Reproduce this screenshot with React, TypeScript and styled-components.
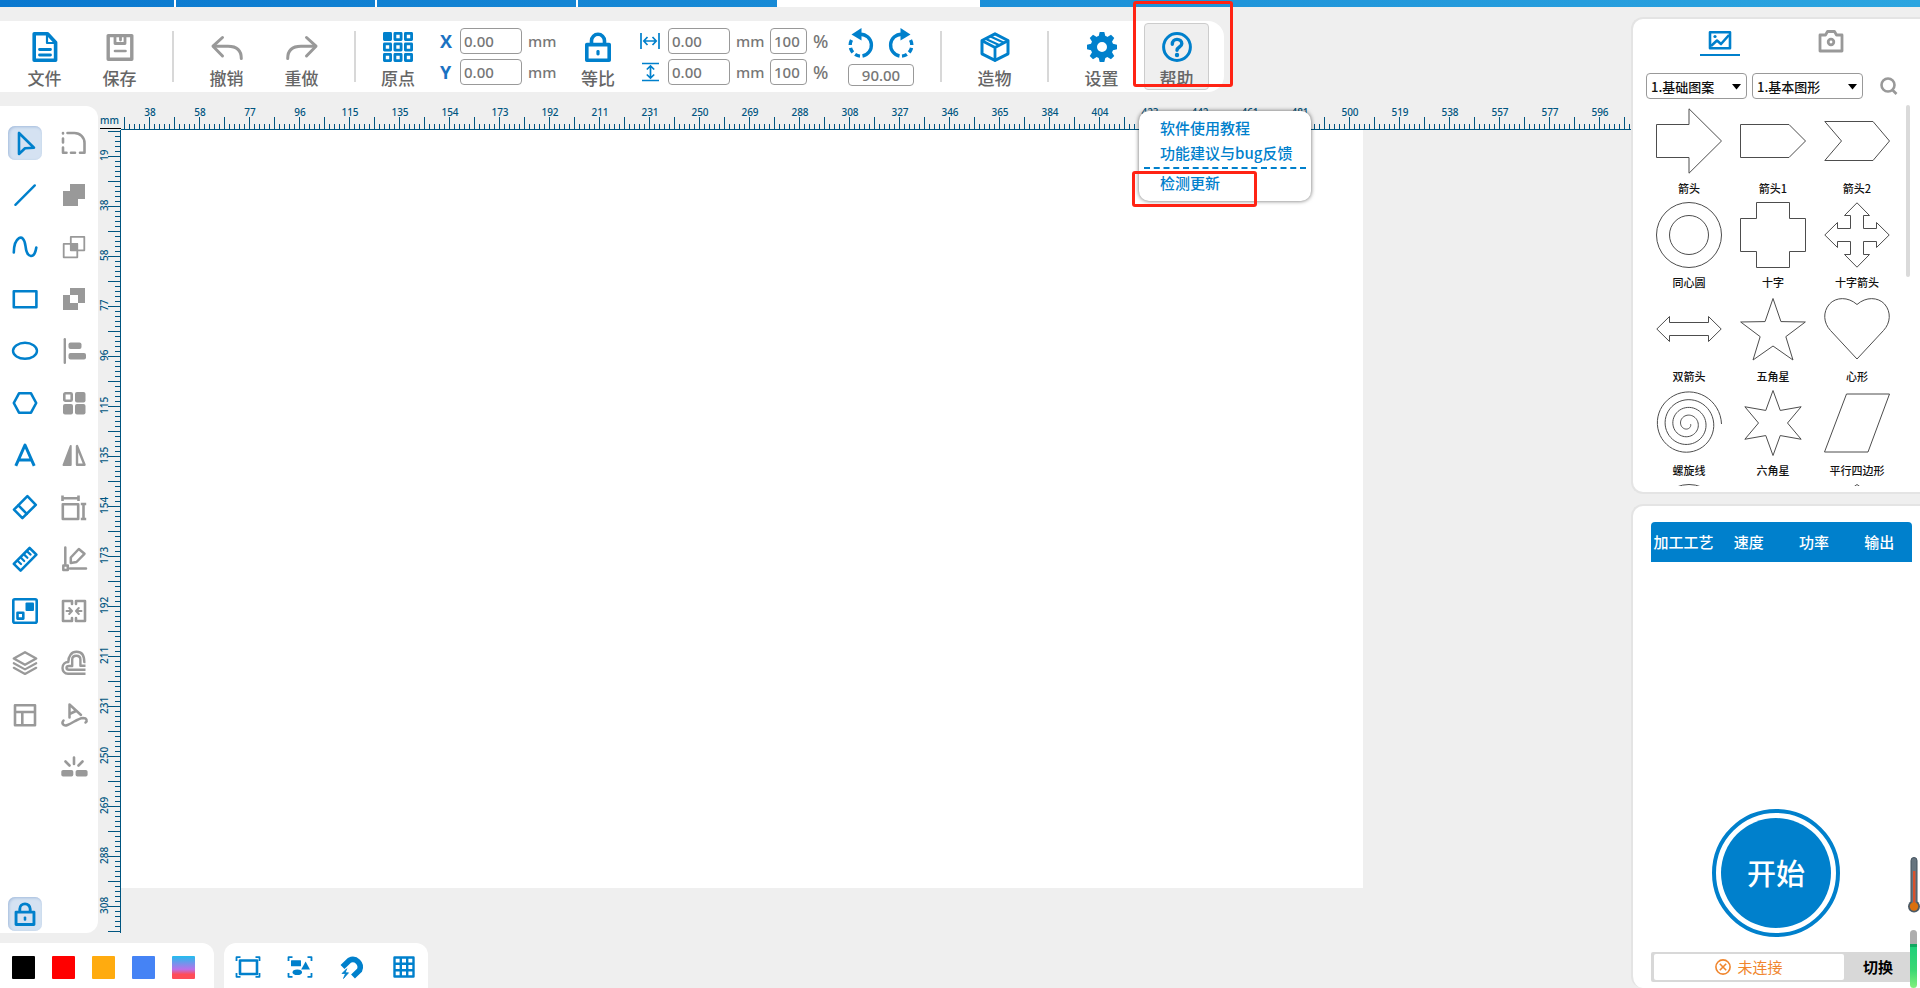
import React from "react";
import styled, { createGlobalStyle, css } from "styled-components";

const BLUE = "#0080cc";
const GREY = "#999999";
const INK = "#005580";
const LATIN = `"Noto Sans", "Noto Sans CJK SC", sans-serif`;

const GlobalStyle = createGlobalStyle`
  *, *::before, *::after { box-sizing: border-box; }
  body {
    margin: 0;
    background: #efefef;
    font-family: "Noto Sans CJK SC", "Noto Sans", sans-serif;
    color: #666;
  }
  button, input, select { font-family: inherit; margin: 0; }
  button { border: 0; padding: 0; background: none; cursor: pointer; color: inherit; }
`;

/* ---------- page frame ---------- */

const Page = styled.div`
  height: 100vh;
  display: flex;
  flex-direction: column;
  overflow: hidden;
`;

const TitleStrip = styled.div`
  flex: none;
  height: 7px;
  display: flex;
  background: linear-gradient(90deg, #0a78cf, #2ca5e0);
`;

const StripTab = styled.span<{ $width: number; $active?: boolean }>`
  width: ${(p) => p.$width}px;
  border-right: 2px solid #fff;
  background: ${(p) => (p.$active ? "#fff" : "transparent")};
`;

const Body = styled.div`
  flex: 1;
  min-height: 0;
  display: flex;
`;

const Main = styled.main`
  flex: 1;
  min-width: 0;
  display: flex;
  flex-direction: column;
  padding-top: 14px;
`;

/* ---------- top toolbar ---------- */

const Toolbar = styled.div`
  align-self: flex-start;
  flex: none;
  height: 71px;
  display: flex;
  align-items: center;
  gap: 10px;
  padding: 0 15px 0 12px;
  background: #fff;
  border-radius: 0 16px 16px 0;
`;

const Divider = styled.span`
  width: 2px;
  height: 51px;
  margin: 0 10px;
  background: #d8d8d8;
`;

const ToolButton = styled.button<{ $narrow?: boolean; $open?: boolean }>`
  width: ${(p) => (p.$narrow ? 44 : 65)}px;
  height: 67px;
  display: flex;
  flex-direction: column;
  align-items: center;
  justify-content: flex-end;
  gap: 6px;
  padding-bottom: 1px;
  font-size: 17px;
  font-weight: 500;
  line-height: 20px;
  color: #666;
  border-radius: 4px;
  border: 1px solid ${(p) => (p.$open ? "#cccccc" : "transparent")};
  background: ${(p) => (p.$open ? "#efefef" : "transparent")};
`;

const Fields = styled.div`
  display: flex;
  align-items: center;
  gap: 20px;
  padding-right: 6px;
`;

const FieldStack = styled.div`
  display: flex;
  flex-direction: column;
  gap: 5px;
`;

const FieldRow = styled.div`
  display: flex;
  align-items: center;
  gap: 6px;
  font: 500 15px/26px ${LATIN};
  color: #777;
`;

const AxisLabel = styled.label`
  width: 14px;
  font: 700 18px/26px "Open Sans", sans-serif;
  color: #1a72c2;
`;

const IconLabel = styled.label`
  display: flex;
  width: 22px;
`;

const Unit = styled.span<{ $percent?: boolean }>`
  width: ${(p) => (p.$percent ? 15 : 28)}px;
  font-size: ${(p) => (p.$percent ? 18 : 15)}px;
`;

const NumberInput = styled.input<{ $width: number; $center?: boolean }>`
  width: ${(p) => p.$width}px;
  height: 26px;
  padding: 0 3px;
  border: 1px solid #999;
  border-radius: 4px;
  background: #fff;
  font: 500 15px/24px ${LATIN};
  color: #777;
  text-align: ${(p) => (p.$center ? "center" : "left")};
`;

const RotateBox = styled.div`
  display: flex;
  flex-direction: column;
  gap: 2px;
`;

const RotatePair = styled.div`
  display: flex;
  justify-content: space-between;
`;

const AngleInput = styled(NumberInput)`
  height: 22px;
`;

/* ---------- help menu ---------- */

const HelpWrap = styled.div`
  position: relative;
`;

const Menu = styled.div`
  position: absolute;
  z-index: 5;
  left: -5px;
  top: 88px;
  width: 172px;
  height: 90px;
  padding: 4px 5px;
  background: #fff;
  border-radius: 10px;
  box-shadow: 0 0 4px rgba(0, 0, 0, 0.6);
`;

const MenuItem = styled.button`
  display: block;
  width: 100%;
  padding-left: 16px;
  font-size: 15px;
  font-weight: 500;
  line-height: 25px;
  text-align: left;
  white-space: nowrap;
  color: ${BLUE};
`;

const MenuRule = styled.hr`
  margin: 2px 0 1px;
  border: 0;
  border-top: 2px dashed ${BLUE};
`;

const Marker = styled.span<{ $top: number; $left: number; $w: number; $h: number }>`
  position: absolute;
  z-index: 6;
  top: ${(p) => p.$top}px;
  left: ${(p) => p.$left}px;
  width: ${(p) => p.$w}px;
  height: ${(p) => p.$h}px;
  border: 3px solid #ff2314;
  border-radius: 3px;
  pointer-events: none;
`;

/* ---------- left tools ---------- */

const Middle = styled.div`
  flex: 1;
  min-height: 0;
  display: flex;
  margin: 14px 0 10px;
`;

const ToolPanel = styled.nav`
  flex: none;
  display: flex;
  gap: 15px;
  width: 98px;
  padding: 20px 7px 2px 8px;
  background: #fff;
  border-radius: 0 12px 12px 0;
`;

const ToolColumn = styled.div`
  display: flex;
  flex-direction: column;
  gap: 18px;
`;

const SideTool = styled.button<{ $on?: boolean; $last?: boolean }>`
  width: 34px;
  height: 34px;
  display: flex;
  align-items: center;
  justify-content: center;
  border-radius: 7px;
  ${(p) =>
    p.$on &&
    css`
      background: #d5e2f2;
      box-shadow: inset 1px 1px 3px #a3bcdc;
    `}
  ${(p) => p.$last && css`margin-top: auto;`}
`;

/* ---------- stage and rulers ---------- */

const Stage = styled.section`
  flex: 1;
  min-width: 0;
  display: grid;
  grid-template: 24px minmax(0, 1fr) / 23px minmax(0, 1fr);
`;

const Corner = styled.div`
  margin-left: 2px;
  margin-bottom: 1px;
  padding-top: 8px;
  border-bottom: 1px solid #000;
  font: 500 10px/12px ${LATIN};
  color: ${INK};
`;

const RulerX = styled.div`
  display: flex;
  overflow: hidden;
  padding-left: 4px;
  border-bottom: 1px solid ${INK};
  background:
    repeating-linear-gradient(90deg, ${INK} 0 1px, transparent 1px 25px) 3px 100% / 100% 12px no-repeat,
    repeating-linear-gradient(90deg, ${INK} 0 1px, transparent 1px 5px) 3px 100% / 100% 5px no-repeat;
`;

const RulerY = styled.div`
  display: flex;
  flex-direction: column;
  overflow: hidden;
  border-right: 1px solid ${INK};
  background:
    repeating-linear-gradient(180deg, ${INK} 0 1px, transparent 1px 25px) 100% 1px / 12px 100% no-repeat,
    repeating-linear-gradient(180deg, ${INK} 0 1px, transparent 1px 5px) 100% 1px / 5px 100% no-repeat;
`;

const TickLabel = styled.span<{ $vertical?: boolean }>`
  flex: 0 0 50px;
  font: 500 10px/12px ${LATIN};
  text-align: center;
  color: ${INK};
  ${(p) =>
    p.$vertical &&
    css`
      width: 12px;
      writing-mode: vertical-rl;
      transform: rotate(180deg);
    `}
`;

const Workspace = styled.div`
  display: flex;
  padding: 0 268px 45px 0;
`;

const Paper = styled.div`
  flex: 1;
  background: #fff;
`;

/* ---------- bottom bars ---------- */

const BottomBar = styled.footer`
  flex: none;
  display: flex;
  gap: 10px;
  height: 45px;
`;

const Palette = styled.div`
  display: flex;
  gap: 17px;
  padding: 13px 19px 9px 12px;
  background: #fff;
  border-radius: 0 12px 0 0;
`;

const Swatch = styled.button<{ $fill: string }>`
  width: 23px;
  height: 23px;
  border-radius: 1px;
  background: ${(p) => p.$fill};
`;

const ViewTools = styled.div`
  display: flex;
  gap: 26px;
  padding: 11px 11px 8px;
  background: #fff;
  border-radius: 12px 12px 0 0;
`;

const ViewTool = styled.button`
  width: 26px;
  height: 26px;
  display: flex;
`;

/* ---------- right column ---------- */

const Side = styled.aside`
  flex: none;
  width: 289px;
  display: flex;
  flex-direction: column;
  gap: 10px;
  padding-top: 10px;
`;

const Card = styled.section`
  position: relative;
  background: #fff;
  border: 2px solid #e4e4e4;
  border-right: 0;
  border-radius: 12px 0 0 12px;
`;

const LibraryCard = styled(Card)`
  padding-bottom: 6px;
`;

const JobCard = styled(Card)`
  flex: 1;
  display: flex;
  flex-direction: column;
  padding: 16px 8px 6px 18px;
  border-bottom: 0;
`;

const TabRow = styled.div`
  display: flex;
  gap: 71px;
  padding: 10px 0 0 67px;
`;

const Tab = styled.button<{ $on?: boolean }>`
  width: 40px;
  height: 27px;
  display: flex;
  justify-content: center;
  border-bottom: 2px solid ${(p) => (p.$on ? BLUE : "transparent")};
`;

const FilterRow = styled.div`
  display: flex;
  align-items: center;
  gap: 5px;
  padding: 17px 0 2px 13px;
`;

const SelectBox = styled.span<{ $width: number }>`
  position: relative;
  display: flex;
  width: ${(p) => p.$width}px;
`;

const Select = styled.select`
  appearance: none;
  width: 100%;
  height: 26px;
  padding: 0 20px 0 4px;
  border: 1px solid #999;
  border-radius: 4px;
  background: #fff;
  font-size: 13px;
  font-weight: 500;
  color: #111;
`;

const Caret = styled.svg`
  position: absolute;
  right: 6px;
  top: 11px;
  pointer-events: none;
`;

const SearchButton = styled.button`
  display: flex;
  margin-left: 12px;
`;

const ShapeArea = styled.div`
  display: flex;
  justify-content: space-between;
  height: 385px;
  padding: 4px 10px 0 14px;
  overflow: hidden;
`;

const ShapeGrid = styled.div`
  display: grid;
  grid-template-columns: repeat(3, 84px);
  align-content: start;
  gap: 4px 0;
  padding-top: 3px;
`;

const ShapeCell = styled.button`
  display: flex;
  flex-direction: column;
  align-items: center;
  gap: 4px;
  height: 90px;
  font-size: 11px;
  font-weight: 500;
  line-height: 20px;
  color: #111;
`;

const ScrollThumb = styled.span`
  width: 4px;
  height: 172px;
  border-radius: 2px;
  background: #dadada;
`;

const JobTable = styled.table`
  width: 100%;
  table-layout: fixed;
  border-collapse: collapse;
  background: ${BLUE};
  border-radius: 4px 4px 0 0;
`;

const HeadCell = styled.th`
  height: 40px;
  padding: 0 0 2px;
  font-size: 15px;
  font-weight: 500;
  white-space: nowrap;
  color: #fff;
`;

const StartButton = styled.button`
  width: 128px;
  height: 128px;
  margin: auto auto 15px 61px;
  padding: 5px;
  border: 4px solid ${BLUE};
  border-radius: 50%;
  display: flex;
`;

const StartFace = styled.span`
  flex: 1;
  height: 110px;
  border-radius: 50%;
  background: ${BLUE};
  font-size: 29px;
  font-weight: 500;
  line-height: 108px;
  color: #fff;
`;

const StatusRow = styled.div`
  display: flex;
  height: 30px;
  padding: 2px 0 2px 3px;
  border-radius: 2px;
  background: #d8d8d8;
`;

const Status = styled.output`
  width: 190px;
  display: flex;
  align-items: center;
  justify-content: center;
  gap: 6px;
  border-radius: 2px;
  background: #fff;
  font-size: 15px;
  line-height: 24px;
  color: #f0862e;
`;

const SwitchButton = styled.button`
  flex: 1;
  font-size: 15px;
  font-weight: 700;
  line-height: 24px;
  color: #000;
`;

const Thermometer = styled.svg`
  position: absolute;
  right: 0;
  bottom: 75px;
`;

const Level = styled.span`
  position: absolute;
  right: 3px;
  bottom: 0;
  width: 7px;
  height: 58px;
  border-radius: 4px;
  background: linear-gradient(#adadad 0 14px, #10a860 14px 17px, #1fd07a 17px, #3ad873 40px, #84f07c);
`;

/* ---------- icons ---------- */

type IconProps = { size?: number; color?: string; stroke?: number; children: React.ReactNode };

const Icon = ({ size = 26, color = BLUE, stroke = 2.6, children }: IconProps) => (
  <svg
    width={size}
    height={size}
    viewBox={`0 0 ${size} ${size}`}
    fill="none"
    stroke={color}
    strokeWidth={stroke}
    strokeLinecap="round"
    strokeLinejoin="round"
    overflow="visible"
    aria-hidden="true"
  >
    {children}
  </svg>
);

const FileIcon = () => (
  <Icon size={30} stroke={3.6}>
    <path d="M4.2 1.8H17.5L25.6 10.5V28.2H4.2Z" />
    <path d="M17 2.5V11H25" strokeWidth={2.2} />
    <path d="M9.5 17.5H20.5M9.5 23H20.5" strokeWidth={2.8} />
  </Icon>
);

const SaveIcon = () => (
  <Icon size={30} stroke={3.4} color={GREY}>
    <path d="M3.2 3.6H26.8V27.2H3.2Z" />
    <path d="M10 4V11.5H20V4M15.5 4V8" strokeWidth={2.8} />
    <path d="M10 19H20.5" strokeWidth={2.6} />
  </Icon>
);

const UndoIcon = ({ flip }: { flip?: boolean }) => (
  <Icon size={30} stroke={3} color={GREY}>
    <g transform={flip ? "matrix(-1 0 0 1 30 0)" : undefined}>
      <path d="M10.5 5.5L1 14.2L10.5 24" />
      <path d="M2 14.2H16C25 14.2 29.3 18.5 29.3 26.5" />
    </g>
  </Icon>
);

const OriginIcon = () => (
  <Icon size={30} stroke={2.8}>
    {[0, 1, 2].flatMap((r) =>
      [0, 1, 2].map((c) => (
        <rect
          key={`${r}${c}`}
          x={1.4 + c * 10.5}
          y={1.4 + r * 10.5}
          width={6.2}
          height={6.2}
          fill={r + c === 0 ? BLUE : "none"}
        />
      ))
    )}
  </Icon>
);

const LockIcon = ({ size = 30 }: { size?: number }) => (
  <svg width={size} height={size} viewBox="0 0 30 30" fill="none" stroke={BLUE} strokeWidth={3.6} strokeLinejoin="round" aria-hidden="true">
    <rect x={3.8} y={12.6} width={22.4} height={15.6} />
    <path d="M8.5 12V8.8A6.5 6.5 0 0 1 21.5 8.8V12" />
    <rect x={13.4} y={18} width={3.2} height={5.5} rx={1.4} fill={BLUE} stroke="none" />
  </svg>
);

const WidthIcon = () => (
  <svg width={20} height={16} viewBox="0 0 20 16" fill="none" stroke={BLUE} strokeWidth={1.7} aria-hidden="true">
    <path d="M1 0V16M19 0V16M4 8H16M7.5 4L3.8 8L7.5 12M12.5 4L16.2 8L12.5 12" />
  </svg>
);

const HeightIcon = () => (
  <svg width={20} height={20} viewBox="0 0 20 20" fill="none" stroke={BLUE} strokeWidth={1.7} aria-hidden="true">
    <path d="M2 1.5H19M2 18.5H19M10.5 4.5V15.5M6.8 7.5L10.5 4L14.2 7.5M6.8 12.5L10.5 16L14.2 12.5" />
  </svg>
);

const RotateIcon = ({ flip }: { flip?: boolean }) => (
  <svg width={26} height={30} viewBox="0 0 26 30" fill="none" stroke={BLUE} strokeWidth={3.4} aria-hidden="true">
    <g transform={flip ? "matrix(-1 0 0 1 26 0)" : undefined}>
      <path d="M12.5 6.2A11 11 0 0 1 14.5 28" />
      <path d="M12 28.1A11 11 0 0 1 5 9.8" strokeDasharray="5.2 2.8" />
      <path d="M3.5 6.5L13.5 0V12.5Z" fill={BLUE} stroke="none" />
    </g>
  </svg>
);

const BoxIcon = () => (
  <Icon size={30} stroke={3}>
    <path d="M15 1.8L28 8.5V21.8L15 28.4L2 21.8V8.5Z" />
    <path d="M2.5 9L15 15.5L27.5 9M15 15.5V28" strokeWidth={2.8} />
    <path d="M7 7.5L19 13M11 4.8L23.5 10.5" strokeWidth={2.2} />
  </Icon>
);

const GearIcon = () => (
  <svg width={30} height={30} viewBox="-15 -15 30 30" aria-hidden="true">
    {[0, 45, 90, 135, 180, 225, 270, 315].map((a) => (
      <path key={a} d="M-3.8 -9L-2.3 -15H2.3L3.8 -9Z" fill={BLUE} transform={`rotate(${a})`} />
    ))}
    <circle r={8.2} fill="none" stroke={BLUE} strokeWidth={6.4} />
  </svg>
);

const HelpIcon = () => (
  <Icon size={30} stroke={3}>
    <circle cx={15} cy={15} r={13.4} />
    <path d="M10.3 12.2C10.3 9.2 12.3 7.4 15 7.4S19.8 9.1 19.8 11.8C19.8 15 15 15 15 18.2" strokeWidth={3.4} />
    <circle cx={15} cy={23} r={2.2} fill={BLUE} stroke="none" />
  </Icon>
);

const CreateTools: { name: string; color?: string; on?: boolean; art: React.ReactNode }[] = [
  { name: "选择", on: true, art: <path d="M7 3V24L13 18.3L22 17.7Z" /> },
  { name: "直线", art: <path d="M3.4 22.8L22.8 3.4" strokeWidth={2.4} /> },
  { name: "曲线", art: <path d="M1.800 18.500C2 4 11.500 -3 13.500 12C15 25 22.500 25 24.300 13.500" /> },
  { name: "矩形", art: <rect x={1.8} y={5.2} width={22.6} height={16} /> },
  { name: "椭圆", art: <ellipse cx={13} cy={12.8} rx={12} ry={8} strokeWidth={2.4} /> },
  { name: "多边形", art: <path d="M1.8 13L7 3.3H19L24.2 13L19 22.7H7Z" /> },
  { name: "文字", art: <path d="M3.8 23.8L13 3L22.2 23.8M7 18H19" strokeLinecap="butt" strokeWidth={3} /> },
  {
    name: "橡皮",
    art: (
      <>
        <path d="M2 15.6L15.4 2.2L23.8 10.8L10.4 24.2Z" />
        <path d="M6.4 11.4L14.8 19.8" />
      </>
    ),
  },
  {
    name: "测量",
    art: (
      <>
        <path d="M1.8 17.8L17.6 2L24.4 8.6L8.6 24.6Z" />
        <path d="M5.8 15L9 18M9 11.8L12.2 15M12.2 8.6L15.4 11.8M15.4 5.6L18.6 8.6" strokeWidth={2.2} />
      </>
    ),
  },
  {
    name: "位图",
    art: (
      <>
        <rect x={1.3} y={1.3} width={23.4} height={23.4} rx={1.5} />
        <rect x={13.5} y={4.5} width={8.5} height={8.5} fill={BLUE} stroke="none" rx={1} />
        <rect x={5.5} y={14.8} width={5.8} height={5.8} />
      </>
    ),
  },
  {
    name: "图层",
    color: GREY,
    art: (
      <>
        <path d="M13 2.2L24.2 8.5L13 14.8L1.8 8.5Z" strokeWidth={2.4} />
        <path d="M1.8 13.2L13 19.4L24.2 13.2M1.8 17.8L13 24L24.2 17.8" strokeWidth={2.2} />
      </>
    ),
  },
  {
    name: "版面",
    color: GREY,
    art: <path d="M3 3.3H23V23.3H3ZM3 10H23M10.3 10V23" />,
  },
];

const EditTools: { name: string; art: React.ReactNode }[] = [
  {
    name: "圆角",
    art: (
      <>
        <path d="M6.5 3H13.5A10 10 0 0 1 23.5 13V22.7H19" />
        <path d="M2 3V3.5M2 8.5V12.5M2 17.5V22.7H5.5M10 22.7H14" />
      </>
    ),
  },
  { name: "合并", art: <path d="M9 2H24V17H17V24H2V9H9Z" fill={GREY} stroke="none" /> },
  {
    name: "相交",
    art: (
      <>
        <path d="M9.8 2.8H23.3V16.3H9.8ZM2.7 9.8H16.3V23.3H2.7Z" strokeWidth={1.8} />
        <path d="M9 9H17V17H9Z" fill={GREY} stroke="none" />
      </>
    ),
  },
  { name: "裁剪", art: <path fillRule="evenodd" d="M9 2H24V17H17V24H2V9H9ZM9 9V17H17V9Z" fill={GREY} stroke="none" /> },
  {
    name: "对齐",
    art: (
      <>
        <path d="M3.8 1.3V24.7" strokeWidth={2.4} />
        <g fill={GREY} stroke="none">
          <rect x={7.5} y={4.5} width={13} height={6.5} rx={2} />
          <rect x={7.5} y={15} width={17.5} height={6.5} rx={2} />
        </g>
      </>
    ),
  },
  {
    name: "编组",
    art: (
      <>
        <rect x={3.3} y={3.3} width={7.4} height={7.4} rx={1} />
        <g fill={GREY} stroke="none">
          <rect x={14} y={2} width={10.5} height={10.5} rx={2} />
          <rect x={2} y={14} width={10} height={10.5} rx={2} />
          <rect x={14} y={14} width={10.5} height={10.5} rx={2} />
        </g>
      </>
    ),
  },
  {
    name: "镜像",
    art: (
      <>
        <path d="M2.5 23L9.7 4V23Z" fill={GREY} strokeWidth={2} />
        <path d="M16 4V22.7H23.5Z" strokeWidth={2.4} />
      </>
    ),
  },
  {
    name: "尺寸",
    art: (
      <g strokeWidth={2.6} strokeLinecap="butt">
        <path d="M1.8 10.3H17.2V25H1.8Z" />
        <path d="M1.5 4.3H17.5M1.5 1.5V7M17.5 1.5V7M22.5 10V25M19.8 10H25.2M19.8 25H25.2" />
      </g>
    ),
  },
  {
    name: "编辑节点",
    art: (
      <g strokeWidth={2.5}>
        <path d="M4.3 1.5V18M9 22.5H25" />
        <rect x={2.3} y={19.5} width={4.5} height={4.5} />
        <path d="M9.8 11.5L17.8 3L23.5 7.8L15.5 16L9.8 17Z" />
      </g>
    ),
  },
  {
    name: "拼接",
    art: (
      <g strokeWidth={2.6}>
        <path d="M11 6V3H2V23H11V20M15 6V3H24V23H15V20" />
        <path d="M5.5 13H10.5M8.2 10L11 13L8.2 16M20.5 13H15.5M17.8 10L15 13L17.8 16" strokeWidth={2} />
      </g>
    ),
  },
  {
    name: "偏移",
    art: (
      <g strokeWidth={2.4} strokeLinecap="butt">
        <path d="M24.5 23.8H7C3.5 23.8 1.5 21 1.5 18C1.5 14.5 4 12 7.3 12C7.3 6 10.5 1.8 15.500 1.800C20.500 1.800 23.300 5.500 23.300 12H24.500" />
        <path d="M24.5 19.800H8C6.500 19.800 5.500 19 5.500 17.800C5.500 16.500 6.700 16 8 16H11.200V9.500C11.200 7 13 5.700 15.300 5.700C17.800 5.700 19.400 7.200 19.400 9.500V15.800H24.500" />
      </g>
    ),
  },
  {
    name: "文字路径",
    art: (
      <g strokeWidth={2.5}>
        <path d="M8.5 15.500V2.500L20 13M8.500 12L15 9" />
        <path d="M2.500 18.500C0 21.500 2.500 24.500 6.500 23C12 21 16.500 16.500 22 16C26 16 26.500 19 24.500 20.500" />
      </g>
    ),
  },
  {
    name: "打散",
    art: (
      <>
        <path d="M13 3.5V10M4.5 7.5L8.5 11.5M21.5 7.5L17.5 11.5" />
        <g fill={GREY} stroke="none">
          <rect x={0.3} y={16} width={12} height={6.5} rx={1.8} />
          <rect x={14.6} y={16} width={12} height={6.5} rx={1.8} />
        </g>
      </>
    ),
  },
];

const Brackets = () => <path d="M1.5 7V3.2H5.5M20.5 3.2H24.5V7M24.5 19V22.8H20.5M5.5 22.8H1.5V19" strokeWidth={1.8} strokeLinecap="butt" />;

const ViewIcons: { name: string; art: React.ReactNode }[] = [
  {
    name: "全幅面",
    art: (
      <>
        <Brackets />
        <rect x={5} y={6.5} width={17} height={13.5} />
      </>
    ),
  },
  {
    name: "全部图形",
    art: (
      <>
        <Brackets />
        <g fill={BLUE} stroke="none">
          <rect x={4} y={6.2} width={10} height={6} rx={0.5} />
          <path d="M18.6 7.5L23 15.5H14.2Z" />
          <ellipse cx={10.3} cy={18.3} rx={4.7} ry={2.8} />
        </g>
      </>
    ),
  },
  {
    name: "吸附",
    art: (
      <>
        <path d="M3.5 13L10.5 6.2A7.6 7.6 0 0 1 20.5 16.3L14 22.5" strokeWidth={5.6} strokeLinecap="butt" />
        <path d="M7.5 15L3 19.5H6.5L4.5 24.5L9.5 18.8H6.5Z" fill={BLUE} strokeWidth={0.8} />
      </>
    ),
  },
  {
    name: "网格",
    art: <path d="M3.5 3.5H22.5V22.5H3.5ZM9.8 3.5V22.5M16.2 3.5V22.5M3.5 9.8H22.5M3.5 16.2H22.5" strokeWidth={2.4} />,
  },
];

/* ---------- shape library ---------- */

const starPoints = (n: number, outer: number, inner: number, cy: number) =>
  Array.from({ length: n * 2 }, (_, i) => {
    const r = i % 2 ? inner : outer;
    const a = (Math.PI * i) / n - Math.PI / 2;
    return `${(33 + r * Math.cos(a)).toFixed(2)},${(cy + r * Math.sin(a)).toFixed(2)}`;
  }).join(" ");

const spiral = Array.from({ length: 200 }, (_, i) => {
  const t = i / 199;
  const a = t * Math.PI * 8;
  const r = 3 + t * 31;
  return `${(31.5 + r * Math.cos(a)).toFixed(2)},${(34 + r * Math.sin(a)).toFixed(2)}`;
}).join(" ");

const Shapes: { label?: string; art: React.ReactNode }[] = [
  { label: "箭头", art: <path d="M.5 16.5H33V.8L65.5 33L33 65.2V49.5H.5Z" /> },
  { label: "箭头1", art: <path d="M.5 16.5H49L65.5 33L49 49.5H.5Z" /> },
  { label: "箭头2", art: <path d="M.8 13.5H49L65.5 33L49 52.5H.8L17.5 33Z" /> },
  {
    label: "同心圆",
    art: (
      <>
        <circle cx={33} cy={33} r={32.5} />
        <circle cx={33} cy={33} r={19.5} />
      </>
    ),
  },
  { label: "十字", art: <path d="M16.5 .5H49.5V16.5H65.5V49.5H49.5V65.5H16.5V49.5H.5V16.5H16.5Z" /> },
  {
    label: "十字箭头",
    art: (
      <path d="M33 .8L45.5 13.5H39.5V26.5H52.5V20.5L65.2 33L52.5 45.5V39.5H39.5V52.5H45.5L33 65.2L20.5 52.5H26.5V39.5H13.5V45.5L.8 33L13.5 20.5V26.5H26.5V13.5H20.5Z" />
    ),
  },
  { label: "双箭头", art: <path d="M.8 33L13.5 20.5V26.5H52.5V20.5L65.2 33L52.5 45.5V39.5H13.5V45.5Z" /> },
  { label: "五角星", art: <polygon points={starPoints(5, 34, 13.5, 36.5)} /> },
  { label: "心形", art: <path d="M33 8.5C24 .5 12 1 5.5 8C-1.5 16 -.5 27 6.5 34.5L33 63L59.5 34.5C66.5 27 67.5 16 60.5 8C54 1 42 .5 33 8.5Z" /> },
  { label: "螺旋线", art: <polyline points={spiral} /> },
  { label: "六角星", art: <polygon points={starPoints(6, 32.5, 14.5, 33)} /> },
  { label: "平行四边形", art: <path d="M22.5 4H65.5L44 62H.5Z" /> },
  { art: <circle cx={33} cy={33} r={32.5} /> },
  { art: <ellipse cx={33} cy={33} rx={32.5} ry={20} /> },
  { art: <path d="M33 .5L65 24L53 62H13L1 24Z" /> },
];

/* one numbered mark every 50px of ruler */
const marks = Array.from({ length: 31 }, (_, i) => Math.round((i + 1) * 19.222));

/* ---------- screen ---------- */

export default function App() {
  return (
    <>
      <GlobalStyle />
      <Page>
        <TitleStrip>
          <StripTab $width={176} />
          <StripTab $width={201} />
          <StripTab $width={201} />
          <StripTab $width={201} />
          <StripTab $width={201} $active />
        </TitleStrip>
        <Body>
          <Main>
            <Toolbar>
              <ToolButton><FileIcon />文件</ToolButton>
              <ToolButton><SaveIcon />保存</ToolButton>
              <Divider />
              <ToolButton><UndoIcon />撤销</ToolButton>
              <ToolButton><UndoIcon flip />重做</ToolButton>
              <Divider />
              <Fields>
                <ToolButton $narrow><OriginIcon />原点</ToolButton>
                <FieldStack>
                  <FieldRow>
                    <AxisLabel htmlFor="pos-x">X</AxisLabel>
                    <NumberInput id="pos-x" $width={62} defaultValue="0.00" />
                    <Unit>mm</Unit>
                  </FieldRow>
                  <FieldRow>
                    <AxisLabel htmlFor="pos-y">Y</AxisLabel>
                    <NumberInput id="pos-y" $width={62} defaultValue="0.00" />
                    <Unit>mm</Unit>
                  </FieldRow>
                </FieldStack>
                <ToolButton $narrow><LockIcon />等比</ToolButton>
                <FieldStack>
                  <FieldRow>
                    <IconLabel htmlFor="size-w" aria-label="宽"><WidthIcon /></IconLabel>
                    <NumberInput id="size-w" $width={62} defaultValue="0.00" />
                    <Unit>mm</Unit>
                    <NumberInput aria-label="宽度比例" $width={37} defaultValue="100" />
                    <Unit $percent>%</Unit>
                  </FieldRow>
                  <FieldRow>
                    <IconLabel htmlFor="size-h" aria-label="高"><HeightIcon /></IconLabel>
                    <NumberInput id="size-h" $width={62} defaultValue="0.00" />
                    <Unit>mm</Unit>
                    <NumberInput aria-label="高度比例" $width={37} defaultValue="100" />
                    <Unit $percent>%</Unit>
                  </FieldRow>
                </FieldStack>
                <RotateBox>
                  <RotatePair>
                    <button aria-label="逆时针旋转"><RotateIcon /></button>
                    <button aria-label="顺时针旋转"><RotateIcon flip /></button>
                  </RotatePair>
                  <AngleInput aria-label="角度" $width={66} $center defaultValue="90.00" />
                </RotateBox>
              </Fields>
              <Divider />
              <ToolButton><BoxIcon />造物</ToolButton>
              <Divider />
              <ToolButton><GearIcon />设置</ToolButton>
              <HelpWrap>
                <ToolButton $open aria-haspopup="menu" aria-expanded="true"><HelpIcon />帮助</ToolButton>
                <Menu role="menu">
                  <MenuItem role="menuitem">软件使用教程</MenuItem>
                  <MenuItem role="menuitem">功能建议与bug反馈</MenuItem>
                  <MenuRule />
                  <MenuItem role="menuitem">检测更新</MenuItem>
                </Menu>
                <Marker $top={-22} $left={-11} $w={100} $h={86} />
                <Marker $top={148} $left={-12} $w={125} $h={36} />
              </HelpWrap>
            </Toolbar>

            <Middle>
              <ToolPanel aria-label="工具">
                <ToolColumn>
                  {CreateTools.map((t) => (
                    <SideTool key={t.name} aria-label={t.name} $on={t.on}>
                      <Icon color={t.color}>{t.art}</Icon>
                    </SideTool>
                  ))}
                  <SideTool aria-label="锁定" $on $last><LockIcon size={24} /></SideTool>
                </ToolColumn>
                <ToolColumn>
                  {EditTools.map((t) => (
                    <SideTool key={t.name} aria-label={t.name}>
                      <Icon color={GREY}>{t.art}</Icon>
                    </SideTool>
                  ))}
                </ToolColumn>
              </ToolPanel>
              <Stage>
                <Corner>mm</Corner>
                <RulerX>
                  {marks.slice(1).map((m) => <TickLabel key={m}>{m}</TickLabel>)}
                </RulerX>
                <RulerY>
                  {marks.slice(0, 16).map((m) => <TickLabel key={m} $vertical>{m}</TickLabel>)}
                </RulerY>
                <Workspace><Paper /></Workspace>
              </Stage>
            </Middle>

            <BottomBar>
              <Palette>
                <Swatch $fill="#000000" aria-label="黑色" />
                <Swatch $fill="#ff0000" aria-label="红色" />
                <Swatch $fill="#ffab0f" aria-label="橙色" />
                <Swatch $fill="#4583f5" aria-label="蓝色" />
                <Swatch $fill="linear-gradient(#22bdee, #b971ea 58%, #ff4d58 80%)" aria-label="渐变" />
              </Palette>
              <ViewTools>
                {ViewIcons.map((t) => (
                  <ViewTool key={t.name} aria-label={t.name}>
                    <Icon>{t.art}</Icon>
                  </ViewTool>
                ))}
              </ViewTools>
            </BottomBar>
          </Main>

          <Side>
            <LibraryCard>
              <TabRow>
                <Tab $on aria-label="图库">
                  <svg width={24} height={22} viewBox="0 0 24 22" fill="none" stroke={BLUE} strokeWidth={2.6} strokeLinejoin="round" aria-hidden="true">
                    <rect x={2} y={3.2} width={20} height={16} />
                    <path d="M3 17L9 11.5L13 15L21 6" />
                    <circle cx={7} cy={7.5} r={1.6} fill={BLUE} stroke="none" />
                  </svg>
                </Tab>
                <Tab aria-label="相机">
                  <svg width={26} height={24} viewBox="0 0 26 24" fill="none" stroke={GREY} strokeWidth={2.8} strokeLinejoin="round" aria-hidden="true">
                    <path d="M2 22V6H7.5L9.5 2.5H16.5L18.5 6H24V22Z" />
                    <circle cx={13} cy={13} r={2.8} />
                  </svg>
                </Tab>
              </TabRow>
              <FilterRow>
                <SelectBox $width={101}>
                  <Select aria-label="图案分类" defaultValue="a"><option value="a">1.基础图案</option></Select>
                  <Caret width={9} height={6} viewBox="0 0 9 6"><path d="M0 0H9L4.5 5.5Z" fill="#000" /></Caret>
                </SelectBox>
                <SelectBox $width={111}>
                  <Select aria-label="图形分类" defaultValue="a"><option value="a">1.基本图形</option></Select>
                  <Caret width={9} height={6} viewBox="0 0 9 6"><path d="M0 0H9L4.5 5.5Z" fill="#000" /></Caret>
                </SelectBox>
                <SearchButton aria-label="搜索">
                  <svg width={18} height={18} viewBox="0 0 18 18" fill="none" stroke={GREY} strokeWidth={2.6} aria-hidden="true">
                    <circle cx={8} cy={8} r={6.5} />
                    <path d="M12 12.5L16.5 17" />
                  </svg>
                </SearchButton>
              </FilterRow>
              <ShapeArea>
                <ShapeGrid>
                  {Shapes.map((s, i) => (
                    <ShapeCell key={i}>
                      <svg width={66} height={66} viewBox="0 0 66 66" fill="none" stroke="#4d4d4d" strokeWidth={1} overflow="visible" aria-hidden="true">
                        {s.art}
                      </svg>
                      {s.label}
                    </ShapeCell>
                  ))}
                </ShapeGrid>
                <ScrollThumb />
              </ShapeArea>
            </LibraryCard>

            <JobCard>
              <JobTable>
                <thead>
                  <tr>
                    <HeadCell>加工工艺</HeadCell>
                    <HeadCell>速度</HeadCell>
                    <HeadCell>功率</HeadCell>
                    <HeadCell>输出</HeadCell>
                  </tr>
                </thead>
              </JobTable>
              <StartButton><StartFace>开始</StartFace></StartButton>
              <StatusRow>
                <Status>
                  <svg width={16} height={16} viewBox="0 0 16 16" fill="none" stroke="#f0862e" strokeWidth={1.6} aria-hidden="true">
                    <circle cx={8} cy={8} r={7.1} />
                    <path d="M4.8 4.8L11.2 11.2M11.2 4.8L4.8 11.2" />
                  </svg>
                  未连接
                </Status>
                <SwitchButton>切换</SwitchButton>
              </StatusRow>
              <Thermometer width={12} height={56} viewBox="0 0 12 56" aria-hidden="true">
                <circle cx={6} cy={49.5} r={6} fill="#4b5a66" />
                <rect x={3} y={0.5} width={6} height={48} rx={3} fill="#66747f" stroke="#43525e" />
                <rect x={5} y={14} width={2.4} height={34} fill="#d9512c" />
                <circle cx={6} cy={49.5} r={4.2} fill="#d9700f" />
              </Thermometer>
              <Level />
            </JobCard>
          </Side>
        </Body>
      </Page>
    </>
  );
}
